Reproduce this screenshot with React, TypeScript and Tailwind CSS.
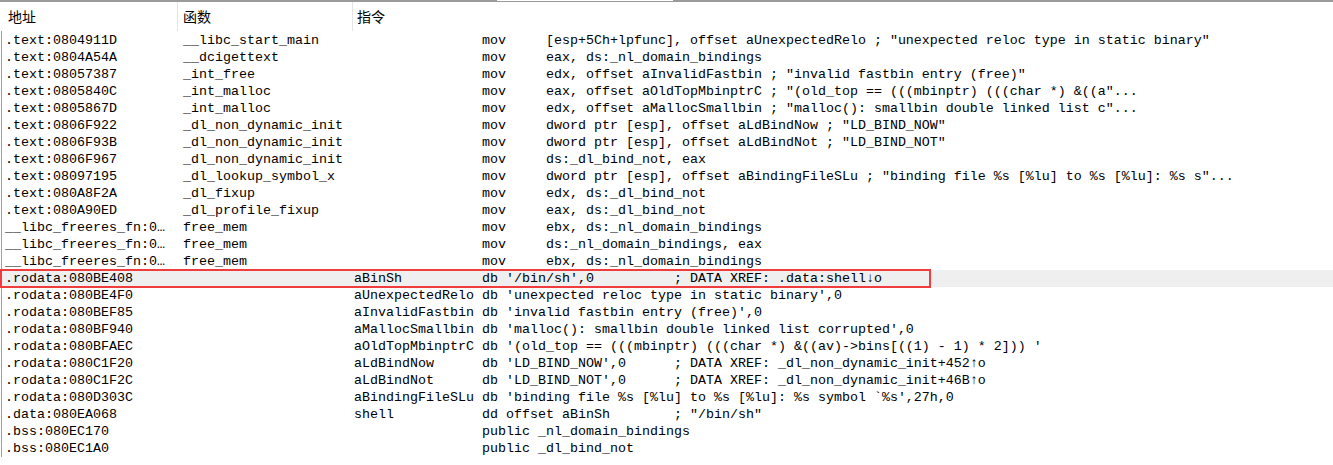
import { Fragment } from 'react';

type Row = {
  addr: string;
  func?: string;
  label?: string;
  mnem: string;
  ops: string;
  comment?: string;
  selected?: boolean;
};

// IDA "xrefs" list — code refs first, then data
const rows: Row[] = [
  { addr: '.text:0804911D', func: '__libc_start_main', mnem: 'mov', ops: '[esp+5Ch+lpfunc], offset aUnexpectedRelo ; "unexpected reloc type in static binary"' },
  { addr: '.text:0804A54A', func: '__dcigettext', mnem: 'mov', ops: 'eax, ds:_nl_domain_bindings' },
  { addr: '.text:08057387', func: '_int_free', mnem: 'mov', ops: 'edx, offset aInvalidFastbin ; "invalid fastbin entry (free)"' },
  { addr: '.text:0805840C', func: '_int_malloc', mnem: 'mov', ops: 'eax, offset aOldTopMbinptrC ; "(old_top == (((mbinptr) (((char *) &((a"...' },
  { addr: '.text:0805867D', func: '_int_malloc', mnem: 'mov', ops: 'edx, offset aMallocSmallbin ; "malloc(): smallbin double linked list c"...' },
  { addr: '.text:0806F922', func: '_dl_non_dynamic_init', mnem: 'mov', ops: 'dword ptr [esp], offset aLdBindNow ; "LD_BIND_NOW"' },
  { addr: '.text:0806F93B', func: '_dl_non_dynamic_init', mnem: 'mov', ops: 'dword ptr [esp], offset aLdBindNot ; "LD_BIND_NOT"' },
  { addr: '.text:0806F967', func: '_dl_non_dynamic_init', mnem: 'mov', ops: 'ds:_dl_bind_not, eax' },
  { addr: '.text:08097195', func: '_dl_lookup_symbol_x', mnem: 'mov', ops: 'dword ptr [esp], offset aBindingFileSLu ; "binding file %s [%lu] to %s [%lu]: %s s"...' },
  { addr: '.text:080A8F2A', func: '_dl_fixup', mnem: 'mov', ops: 'edx, ds:_dl_bind_not' },
  { addr: '.text:080A90ED', func: '_dl_profile_fixup', mnem: 'mov', ops: 'eax, ds:_dl_bind_not' },
  { addr: '__libc_freeres_fn:0…', func: 'free_mem', mnem: 'mov', ops: 'ebx, ds:_nl_domain_bindings' },
  { addr: '__libc_freeres_fn:0…', func: 'free_mem', mnem: 'mov', ops: 'ds:_nl_domain_bindings, eax' },
  { addr: '__libc_freeres_fn:0…', func: 'free_mem', mnem: 'mov', ops: 'ebx, ds:_nl_domain_bindings' },
  { addr: '.rodata:080BE408', label: 'aBinSh', mnem: 'db', ops: "'/bin/sh',0", comment: 'DATA XREF: .data:shell↓o', selected: true },
  { addr: '.rodata:080BE4F0', label: 'aUnexpectedRelo', mnem: 'db', ops: "'unexpected reloc type in static binary',0" },
  { addr: '.rodata:080BEF85', label: 'aInvalidFastbin', mnem: 'db', ops: "'invalid fastbin entry (free)',0" },
  { addr: '.rodata:080BF940', label: 'aMallocSmallbin', mnem: 'db', ops: "'malloc(): smallbin double linked list corrupted',0" },
  { addr: '.rodata:080BFAEC', label: 'aOldTopMbinptrC', mnem: 'db', ops: "'(old_top == (((mbinptr) (((char *) &((av)->bins[((1) - 1) * 2])) '" },
  { addr: '.rodata:080C1F20', label: 'aLdBindNow', mnem: 'db', ops: "'LD_BIND_NOW',0", comment: 'DATA XREF: _dl_non_dynamic_init+452↑o' },
  { addr: '.rodata:080C1F2C', label: 'aLdBindNot', mnem: 'db', ops: "'LD_BIND_NOT',0", comment: 'DATA XREF: _dl_non_dynamic_init+46B↑o' },
  { addr: '.rodata:080D303C', label: 'aBindingFileSLu', mnem: 'db', ops: "'binding file %s [%lu] to %s [%lu]: %s symbol `%s',27h,0" },
  { addr: '.data:080EA068', label: 'shell', mnem: 'dd', ops: 'offset aBinSh', comment: '"/bin/sh"' },
  { addr: '.bss:080EC170', mnem: 'public', ops: '_nl_domain_bindings' },
  { addr: '.bss:080EC1A0', mnem: 'public', ops: '_dl_bind_not' },
];

// code lines pad the mnemonic, data lines use a single space
function instrText(r: Row) {
  const body = r.mnem === 'mov' ? r.mnem.padEnd(8, ' ') + r.ops : r.mnem + ' ' + r.ops;
  let s = (r.label ?? '').padEnd(16, ' ');
  if (r.comment) s += body.padEnd(24, ' ') + '; ' + r.comment;
  else s += body;
  return s;
}

const mono = "font-['Liberation_Mono',monospace] text-[13.333px] leading-[17px]";

export default function App() {
  return (
    <div className="w-[1333px] h-[465px] overflow-hidden bg-white text-black">
      {/* top tab edge */}
      <div className="flex h-[2px] bg-[#9a9a9a]">
        <div className="ml-[497px] w-[176px] h-[1px] bg-white" />
      </div>

      {/* header */}
      <div className="flex h-[29px] items-center font-['Noto_Sans_CJK_SC',sans-serif] text-[14px]">
        <div className="w-[178px] h-full flex items-center pl-[8px] border-r border-[#e5e5e5]">地址</div>
        <div className="w-[175px] h-full flex items-center pl-[5px] border-r border-[#e5e5e5]">函数</div>
        <div className="flex-1 h-full flex items-center pl-[4px]">指令</div>
      </div>

      {/* rows */}
      <div className={`ml-px border-l border-[#a0a0a0] pt-px ${mono}`}>
        {rows.map((r, i) => (
          <div
            key={i}
            className={`relative flex h-[17px] whitespace-pre ${r.selected ? 'bg-[#efefef]' : ''}`}
          >
            <div className="w-[176px] pl-[3px] overflow-hidden">{r.addr}</div>
            <div className="w-[175px] pl-[5px] overflow-hidden">{r.func ?? ''}</div>
            <div className="flex-1 pl-[1px]">{instrText(r)}</div>
            {r.selected && (
              <Fragment>
                <div className="absolute -left-[2px] -top-[1px] w-[931px] h-[19px] border-2 border-[#f03c3c]" />
              </Fragment>
            )}
          </div>
        ))}
      </div>
    </div>
  );
}
